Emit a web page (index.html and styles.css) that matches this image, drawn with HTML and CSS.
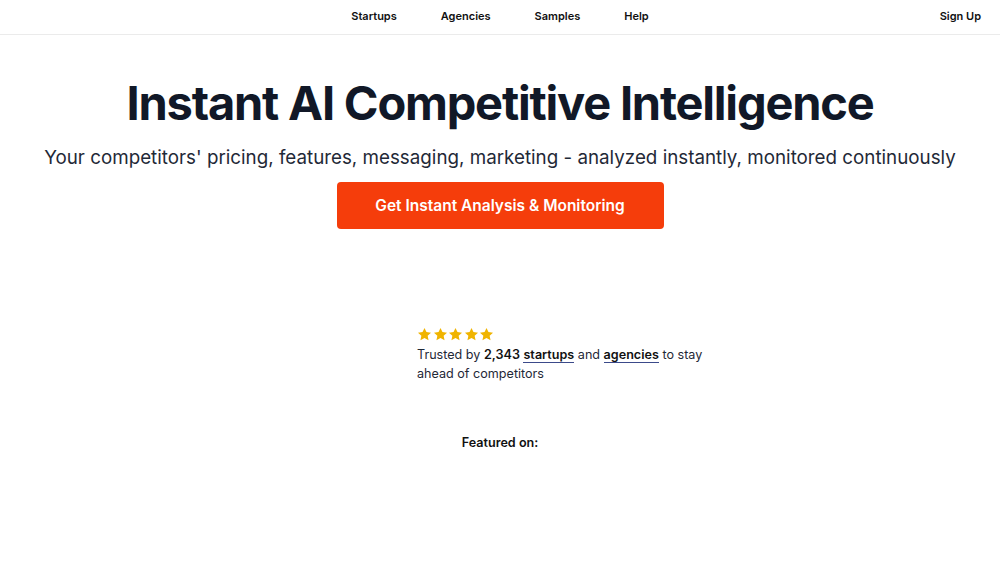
FILE: index.html
```html
<!DOCTYPE html>
<html>
<head>
<meta charset="utf-8">
<link rel="stylesheet" href="styles.css">
</head>
<body>
<header class="topbar">
  <nav class="nav">
    <a href="#">Startups</a>
    <a href="#">Agencies</a>
    <a href="#">Samples</a>
    <a href="#">Help</a>
  </nav>
  <a class="signup" href="#">Sign Up</a>
</header>
<main class="hero">
  <h1>Instant AI Competitive Intelligence</h1>
  <p class="sub">Your competitors' pricing, features, messaging, marketing - analyzed instantly, monitored continuously</p>
  <a class="cta" href="#">Get Instant Analysis &amp; Monitoring</a>
  <div class="proof">
    <div class="stars">
      <svg viewBox="0 0 20 20" width="15" height="15"><path d="M10 1.2l2.6 5.6 6.1.7-4.5 4.2 1.2 6.1L10 14.8l-5.4 3 1.2-6.1L1.3 7.5l6.1-.7z"/></svg>
      <svg viewBox="0 0 20 20" width="15" height="15"><path d="M10 1.2l2.6 5.6 6.1.7-4.5 4.2 1.2 6.1L10 14.8l-5.4 3 1.2-6.1L1.3 7.5l6.1-.7z"/></svg>
      <svg viewBox="0 0 20 20" width="15" height="15"><path d="M10 1.2l2.6 5.6 6.1.7-4.5 4.2 1.2 6.1L10 14.8l-5.4 3 1.2-6.1L1.3 7.5l6.1-.7z"/></svg>
      <svg viewBox="0 0 20 20" width="15" height="15"><path d="M10 1.2l2.6 5.6 6.1.7-4.5 4.2 1.2 6.1L10 14.8l-5.4 3 1.2-6.1L1.3 7.5l6.1-.7z"/></svg>
      <svg viewBox="0 0 20 20" width="15" height="15"><path d="M10 1.2l2.6 5.6 6.1.7-4.5 4.2 1.2 6.1L10 14.8l-5.4 3 1.2-6.1L1.3 7.5l6.1-.7z"/></svg>
    </div>
    <p class="trust">Trusted by <b>2,343</b> <a href="#">startups</a> and <a href="#">agencies</a> to stay ahead of competitors</p>
  </div>
  <p class="featured">Featured on:</p>
</main>
</body>
</html>
```
FILE: styles.css
```css
* { box-sizing: border-box; }
html, body { margin: 0; padding: 0; background: #fff; }
body { font-family: Inter, "Noto Sans", sans-serif; color: #111827; }
a { color: inherit; text-decoration: none; }
.topbar {
  position: relative;
  height: 35px;
  border-bottom: 1px solid #ebebeb;
  display: flex;
  align-items: center;
  justify-content: center;
  padding-bottom: 2px;
}
.nav { display: flex; gap: 44px; font-size: 11px; font-weight: 600; color: #111; }
.signup {
  position: absolute; right: 19px; top: 0; height: 32px;
  display: flex; align-items: center;
  font-size: 11px; font-weight: 600; color: #111;
}
.hero { display: flex; flex-direction: column; align-items: center; }
h1 {
  margin: 40px 0 0;
  font-size: 47px; font-weight: 700; letter-spacing: -1.2px;
  line-height: 56px; color: #111827;
}
.sub { margin: 14px 0 0; font-size: 18.8px; line-height: 26px; color: #1f2937; }
.cta {
  margin-top: 11px;
  width: 327px; height: 47px;
  display: flex; align-items: center; justify-content: center;
  background: #f53d0b; color: #fff; border-radius: 4px;
  font-size: 15.5px; font-weight: 600;
}
.proof { margin-top: 98px; width: 300px; margin-left: 134px; }
.stars { display: flex; gap: 0.5px; fill: #f0b400; }
.trust { margin: 3px 0 0; font-size: 12.6px; line-height: 19px; color: #1f2937; }
.trust b { font-weight: 600; color: #111; }
.trust a { font-weight: 600; color: #111; border-bottom: 1px solid #3b4a8a; }
.featured { margin: 52px 0 0; font-size: 12.6px; font-weight: 600; color: #111; }
```
